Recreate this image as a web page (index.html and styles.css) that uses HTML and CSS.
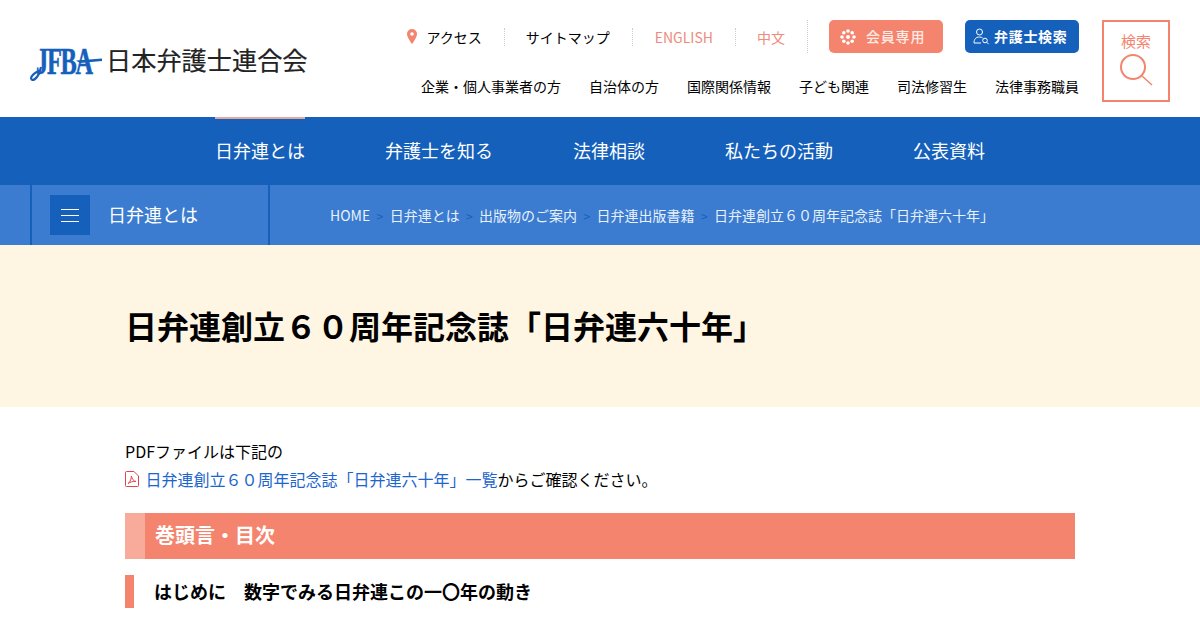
FILE: index.html
```html
<!DOCTYPE html>
<html lang="ja">
  <head>
    <meta charset="utf-8">
    <title>日弁連創立６０周年記念誌「日弁連六十年」</title>
    <link rel="stylesheet" href="styles.css">
  </head>
  <body>
    <header class="site-head">
      <a class="logo">
        <span class="logo-mark">
          <span class="logo-latin">JFBA</span>
          <svg class="logo-swash" width="73" height="36" viewBox="0 0 73 36">
            <path d="M46 14.500 L72 12.500 L72 15 L50 17z" fill="#1560bb"/>
            <path d="M11 21 C10 29 5 34 2.500 34 C-.500 33 1 28 11 24" stroke="#1560bb" stroke-width="2.200" fill="none"/>
          </svg>
        </span>
        <span class="logo-name">日本弁護士連合会</span>
      </a>
      <div class="head-links">
        <div class="util-row">
          <ul class="util-list">
            <li class="util-item util-access">
              <svg width="10" height="15" viewBox="0 0 10 15"><path d="M5 0a5 5 0 0 1 5 5c0 3.500-5 10-5 10S0 8.500 0 5a5 5 0 0 1 5-5z" fill="#f4846e"/><circle cx="5" cy="5" r="1.800" fill="#fff"/></svg>
              <span>アクセス</span>
            </li>
            <li class="util-item util-map">サイトマップ</li>
            <li class="util-item util-lang">ENGLISH</li>
            <li class="util-item util-lang">中文</li>
          </ul>
          <a class="head-btn btn-member">
            <svg width="16" height="16" viewBox="0 0 16 16" fill="#fff"><circle cx="8" cy="8" r="2"/><circle cx="8" cy="2" r="1.800"/><circle cx="8" cy="14" r="1.800"/><circle cx="2" cy="8" r="1.800"/><circle cx="14" cy="8" r="1.800"/><circle cx="3.800" cy="3.800" r="1.800"/><circle cx="12.200" cy="3.800" r="1.800"/><circle cx="3.800" cy="12.200" r="1.800"/><circle cx="12.200" cy="12.200" r="1.800"/></svg>
            <span>会員専用</span>
          </a>
          <a class="head-btn btn-lawyer">
            <svg width="17" height="17" viewBox="0 0 17 17" fill="none" stroke="#fff" stroke-width="1"><circle cx="6.500" cy="4" r="3"/><path d="M1 15c0-4 2-6 5.500-6 1.500 0 2.500.4 3.200 1M1 15h7"/><circle cx="12" cy="12.500" r="2.300"/><path d="M13.700 14.200l2 2"/></svg>
            <span>弁護士検索</span>
          </a>
        </div>
        <ul class="target-list">
          <li>企業・個人事業者の方</li>
          <li>自治体の方</li>
          <li>国際関係情報</li>
          <li>子ども関連</li>
          <li>司法修習生</li>
          <li>法律事務職員</li>
        </ul>
      </div>
      <a class="search-box">
        <span>検索</span>
        <svg width="33" height="32" viewBox="0 0 33 32" fill="none" stroke="#f4846e" stroke-width="2"><circle cx="13" cy="13" r="12"/><path d="M22 22l10 9" stroke-width="1.500"/></svg>
      </a>
    </header>

    <nav class="global-nav">
      <a class="nav-item nav-current">日弁連とは</a>
      <a class="nav-item">弁護士を知る</a>
      <a class="nav-item">法律相談</a>
      <a class="nav-item">私たちの活動</a>
      <a class="nav-item">公表資料</a>
    </nav>

    <div class="sub-bar">
      <div class="sub-title">
        <span class="menu-btn"><i></i><i></i><i></i></span>
        <span>日弁連とは</span>
      </div>
      <ol class="crumbs">
        <li>HOME</li>
        <li>日弁連とは</li>
        <li>出版物のご案内</li>
        <li>日弁連出版書籍</li>
        <li>日弁連創立６０周年記念誌「日弁連六十年」</li>
      </ol>
    </div>

    <div class="page-title">
      <h1>日弁連創立６０周年記念誌「日弁連六十年」</h1>
    </div>

    <main class="content">
      <p class="lead">PDFファイルは下記の<br>
        <svg class="pdf-icon" width="14" height="16" viewBox="0 0 14 16" fill="none" stroke="#e0454f" stroke-width="1"><path d="M.5 1.500a1 1 0 0 1 1-1h7.500l4.500 4.500v9.500a1 1 0 0 1-1 1h-11a1 1 0 0 1-1-1z"/><path d="M3 12.500C5.500 11 6.500 7 6.300 5c1 3 2 5 4.700 5.500-3-.3-6 .5-8 2z"/></svg>
        <a class="pdf-link">日弁連創立６０周年記念誌「日弁連六十年」一覧</a>からご確認ください。
      </p>
      <h2>巻頭言・目次</h2>
      <h3>はじめに　数字でみる日弁連この一〇年の動き</h3>
    </main>
  </body>
</html>
```

FILE: styles.css
```css
*{
    box-sizing: border-box;
}
html,body{
    margin: 0;
    height: 630px;
    overflow: hidden;
}
body{
    background-color: #fff;
    color: #000;
    font-family: "Noto Sans CJK JP", "Noto Sans", sans-serif;
    font-size: 16px;
}
ul,ol{
    list-style: none;
    margin: 0;
    padding: 0;
}

/* header */
.site-head{
    display: flex;
    height: 117px;
    padding: 20px 30px 0;
    align-items: flex-start;
}
.logo{
    display: flex;
    align-items: flex-start;
    margin-top: 26px;
    flex: none;
}
.logo-mark{
    position: relative;
    width: 73px;
    height: 36px;
}
.logo-latin{
    position: absolute;
    left: 6px;
    top: -3px;
    font-family: "Liberation Serif", serif;
    font-weight: bold;
    font-size: 38px;
    line-height: 36px;
    letter-spacing: -2px;
    color: #1560bb;
    -webkit-text-stroke: .6px #1560bb;
    transform: scaleX(.64);
    transform-origin: left top;
}
.logo-swash{
    position: absolute;
    left: 0;
    top: 0;
}
.logo-name{
    margin: -1px 0 0 3px;
    font-size: 25.2px;
    line-height: 28px;
    color: #222;
    -webkit-text-stroke: .2px #222;
    white-space: nowrap;
}
.head-links{
    margin-left: auto;
    width: 672px;
}
.util-row{
    display: flex;
    align-items: center;
    justify-content: flex-end;
    height: 33px;
}
.util-list{
    display: flex;
    align-items: center;
    flex: none;
}
.util-item{
    display: flex;
    align-items: center;
    gap: 9px;
    height: 18px;
    font-size: 14px;
    line-height: 18px;
    padding: 0 22px;
    border-right: 1px dotted #ccc;
    white-space: nowrap;
}
.util-access{
    padding-left: 0;
}
.util-map{
    padding: 0 22px 0 21px;
}
.util-lang{
    color: #ee8c7c;
}
.util-lang:last-child{
    height: 33px;
    padding-left: 21px;
}
.head-btn{
    display: flex;
    flex: none;
    align-items: center;
    width: 114px;
    height: 33px;
    border-radius: 5px;
    font-size: 14px;
    line-height: 20px;
    font-weight: 500;
    letter-spacing: .8px;
    color: #fff;
}
.btn-member{
    background-color: #f4846e;
    gap: 10px;
    padding-left: 11px;
    color: #ffe9e3;
    margin-left: 21px;
    margin-right: 22px;
}
.btn-lawyer{
    background-color: #1560bb;
    gap: 4px;
    padding-left: 8px;
    font-weight: 700;
    letter-spacing: .7px;
}
.head-btn span{
    margin-top: -1px;
}
.target-list{
    display: flex;
    justify-content: flex-end;
    gap: 28px;
    margin-top: 23px;
    font-size: 14px;
    line-height: 20px;
    white-space: nowrap;
}
.search-box{
    flex: none;
    display: flex;
    flex-direction: column;
    align-items: center;
    width: 68px;
    height: 82px;
    margin-left: 23px;
    padding-top: 9px;
    border: 2px solid #f4846e;
    font-size: 15px;
    line-height: 20px;
    color: #f4846e;
}
.search-box svg{
    margin-top: 3px;
}

/* global nav */
.global-nav{
    display: flex;
    justify-content: center;
    gap: 80px;
    height: 68px;
    background-color: #1560bb;
}
.nav-item{
    height: 68px;
    font-size: 18px;
    line-height: 66px;
    color: #fff;
}
.nav-current{
    box-shadow: inset 0 2px 0 #e8a59c;
}

/* sub bar */
.sub-bar{
    display: flex;
    height: 60px;
    background-color: #3b7bd0;
    padding-left: 30px;
    color: #fff;
}
.sub-title{
    display: flex;
    align-items: center;
    gap: 18px;
    width: 240px;
    padding-left: 18px;
    border-left: 2px solid #1560bb;
    border-right: 2px solid #1560bb;
    font-size: 18px;
    line-height: 26px;
}
.sub-title span + span{
    margin-top: -2px;
}
.menu-btn{
    display: flex;
    flex-direction: column;
    justify-content: center;
    align-items: center;
    gap: 5px;
    width: 40px;
    height: 40px;
    background-color: #1560bb;
}
.menu-btn i{
    display: block;
    width: 18px;
    height: 1px;
    background-color: #fff;
}
.crumbs{
    display: flex;
    align-items: center;
    margin-left: 60px;
    font-size: 14px;
    color: #e8f2fd;
}
.crumbs li + li::before{
    content: ">";
    margin: 0 6.4px;
    font-size: 12px;
    color: #1560bb;
}

/* title */
.page-title{
    height: 162px;
    padding: 56px 125px 0;
    background-color: #fff5e3;
}
h1{
    margin: 0;
    font-size: 32px;
    line-height: 48px;
    font-weight: 700;
}

/* content */
.content{
    width: 950px;
    margin: 0 auto;
    padding-top: 30px;
}
.lead{
    margin: 0;
    line-height: 28px;
}
.pdf-icon{
    vertical-align: -1px;
    margin-right: 3px;
}
.pdf-link{
    color: #1b65cc;
}
h2{
    margin: 20px 0 0;
    height: 46px;
    padding-left: 30px;
    background: linear-gradient(to right, #f8ab9b 20px, #f4846e 20px);
    font-size: 20px;
    line-height: 44px;
    font-weight: 700;
    color: #fff;
}
h3{
    margin: 16px 0 0;
    height: 33px;
    padding-left: 20px;
    border-left: 9px solid #f4846e;
    font-size: 18px;
    line-height: 33px;
    font-weight: 700;
}
```
